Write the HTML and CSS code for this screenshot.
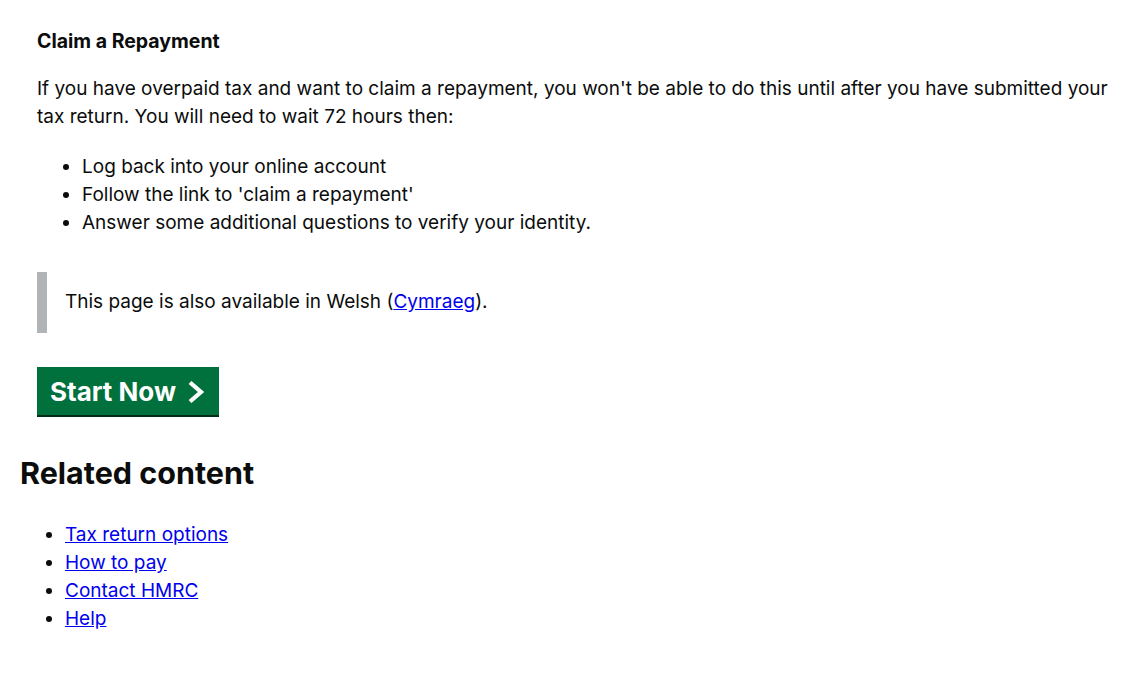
FILE: index.html
```html
<!DOCTYPE html>
<html lang="en">
<head>
<meta charset="utf-8">
<title>Claim a Repayment</title>
<link rel="stylesheet" href="styles.css">
</head>
<body>
<main class="page">
  <section class="section">
    <h3 class="section-title">Claim a Repayment</h3>
    <p class="body">If you have overpaid tax and want to claim a repayment, you won't be able to do this until after you have submitted your tax return. You will need to wait 72 hours then:</p>
    <ul class="list">
      <li>Log back into your online account</li>
      <li>Follow the link to 'claim a repayment'</li>
      <li>Answer some additional questions to verify your identity.</li>
    </ul>
    <div class="inset">This page is also available in Welsh (<a href="#" class="link">Cymraeg</a>).</div>
    <a href="#" class="button">Start Now
      <svg class="chev" width="18" height="22" viewBox="0 0 18 22" aria-hidden="true"><path d="M3 1.5 L14 11 L3 20.5" fill="none" stroke="#fff" stroke-width="4.2"/></svg>
    </a>
  </section>
  <h2 class="related-title">Related content</h2>
  <ul class="list related">
    <li><a href="#" class="link">Tax return options</a></li>
    <li><a href="#" class="link">How to pay</a></li>
    <li><a href="#" class="link">Contact HMRC</a></li>
    <li><a href="#" class="link">Help</a></li>
  </ul>
</main>
</body>
</html>
```
FILE: styles.css
```css
html, body {
  margin: 0;
  padding: 0;
  background: #fff;
}
body {
  font-family: "Inter", "Liberation Sans", sans-serif;
  color: #0b0c0c;
  font-size: 19px;
  line-height: 28px;
}
.page {
  padding: 0 10px 0 20px;
}
.section {
  padding: 27px 0 0 17px;
}
.section-title {
  margin: 0 0 20px 0;
  font-size: 19.5px;
  line-height: 28px;
  font-weight: 700;
}
.body {
  margin: 0 0 22px 0;
}
.list {
  margin: 0 0 35px 0;
  padding-left: 45px;
}
.list li {
  margin: 0;
}
.inset {
  border-left: 10px solid #b1b4b6;
  padding: 16px 18px 17px 18px;
  margin: 0 0 34px 0;
}
.link {
  color: #0000ee;
  text-decoration: underline;
}
.button {
  display: inline-flex;
  align-items: center;
  gap: 11px;
  background: #00703c;
  color: #fff;
  font-weight: 700;
  font-size: 26px;
  line-height: 30px;
  padding: 10px 14px 8px 13px;
  text-decoration: none;
  box-shadow: 0 2px 0 #002d18;
}
.chev {
  display: block;
}
.related-title {
  margin: 40px 0 30px 0;
  font-size: 30.5px;
  line-height: 36px;
  font-weight: 700;
}
.related {
  margin: 0;
}
```
